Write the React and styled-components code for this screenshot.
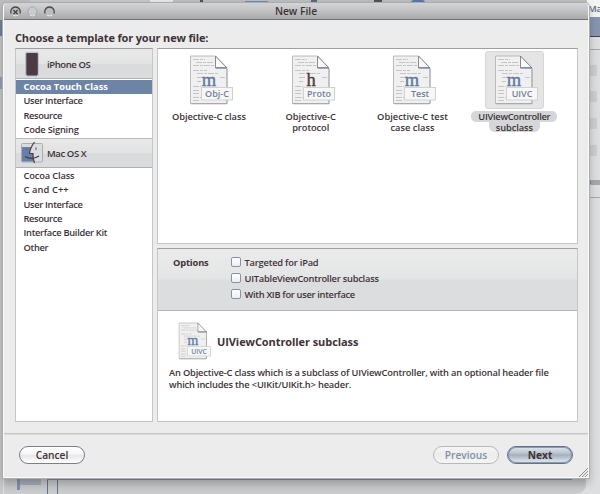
import React from "react";
import styled, { createGlobalStyle, css } from "styled-components";

const Global = createGlobalStyle`
  *{box-sizing:border-box}
  body{margin:0;overflow:hidden;color:#3d3238;font-family:"Open Sans","Noto Sans",sans-serif;font-size:9.3px;font-weight:600}
`;
const Desktop = styled.div`
  position:relative;width:600px;height:494px;background:#dcdee0;overflow:hidden;
`;
const Scrap = styled.div`
  position:absolute;left:${p => p.$x}px;top:${p => p.$y}px;width:${p => p.$w}px;height:${p => p.$h}px;
  background:${p => p.$c};border-radius:${p => p.$r || 0};
`;
const BackText = styled.span`
  position:absolute;left:588px;top:2px;font-size:9.5px;line-height:13px;color:#5b6d8d;letter-spacing:-.3px;
`;
const Window = styled.section`
  position:absolute;left:3px;top:3px;width:586px;height:475px;
  display:flex;flex-direction:column;background:#ececec;border-radius:4px 4px 0 0;
  border-left:1px solid #fafafa;border-right:1px solid #fafafa;border-bottom:1px solid #fafafa;
  box-shadow:0 0 0 1px #aaacae,0 4px 8px 1px rgba(0,0,0,.22);
`;
const TitleBar = styled.header`
  height:17px;flex:none;display:grid;grid-template-columns:60px 1fr 60px;align-items:center;
  border-radius:4px 4px 0 0;border-bottom:1px solid #6d7280;
  background:linear-gradient(#d3d4d5,#c2c4c5 45%,#aaa9a9);
`;
const Lights = styled.div`display:flex;gap:6px;padding-left:6px;`;
const Title = styled.h1`
  margin:0;text-align:center;font-size:10.3px;font-weight:600;line-height:16px;
`;
const Content = styled.main`
  height:414px;flex:none;display:grid;grid-template-columns:138px 421px;grid-template-rows:28px 374px;
  column-gap:4px;padding-left:11px;border-bottom:1px solid #c2c2c2;box-shadow:0 1px #dcdcdc;
`;
const Heading = styled.h2`
  grid-column:1/3;margin:0;font-size:11px;font-weight:700;line-height:16px;padding-top:10px;
  letter-spacing:-.16px;white-space:nowrap;
`;
const panel = css`
  border:1px solid #c6c6c6;border-top-color:#9f9f9f;background:#fff;
`;
const Sidebar = styled.nav`${panel}`;
const Group = styled.div`
  display:flex;align-items:center;height:30px;padding-left:5px;gap:4px;letter-spacing:-.4px;
  border-top:1px solid ${p => p.$first ? "#e6e6e6" : "#b9babb"};border-bottom:1px solid #aeb0b2;
  background:linear-gradient(#e9e9e9,#e2e3e3 50%,#d9dadb 52%,#dadcdd);
  font-size:9.5px;
`;
const List = styled.ul`
  list-style:none;margin:0;padding:1px 0 ${p => p.$tail || 0}px;
`;
const Item = styled.li`
  height:14.3px;line-height:14px;padding-left:7.5px;white-space:nowrap;letter-spacing:${p => p.$ls || 0}px;
  ${p => p.$selected && css`background:#6d84a4;color:#fff;font-weight:700;`}
`;
const Right = styled.div`display:grid;grid-template-rows:196px 1fr;row-gap:4px;`;
const Templates = styled.div`
  ${panel} display:grid;grid-template-columns:repeat(4,101.8px);padding:2px 0 0;
`;
const Template = styled.div`display:flex;flex-direction:column;align-items:center;`;
const IconWell = styled.div`
  width:59px;height:58px;border-radius:3px;display:flex;align-items:center;justify-content:center;padding-left:4px;
  border:1px solid transparent;
  ${p => p.$selected && css`background:#e5e5e5;border-color:#d6d6d6;`}
`;
const Label = styled.div`
  display:flex;flex-direction:column;align-items:center;margin-top:2px;white-space:nowrap;
`;
const Line = styled.span`
  height:10.6px;line-height:11.4px;padding:0 7px;letter-spacing:${p => p.$ls || 0}px;
  ${p => p.$selected && css`background:#d4d6d7;border-radius:5px;& + &{border-radius:0 0 6px 6px;}`}
`;
const Details = styled.div`${panel}`;
const Options = styled.div`
  display:grid;grid-template-columns:58px 1fr;height:62px;padding:5px 15px;
  border-bottom:1px solid #b4b5b6;
  background:linear-gradient(#ebebeb,#e4e5e5 48%,#dcddde 51%,#dcddde);
`;
const OptionsTitle = styled.strong`line-height:17px;font-weight:700;letter-spacing:-.15px;`;
const Choices = styled.div`display:flex;flex-direction:column;`;
const Choice = styled.label`
  display:flex;align-items:center;gap:3.5px;height:16px;letter-spacing:${p => p.$ls || 0}px;
`;
const Checkbox = styled.span`
  width:10px;height:10px;border:1px solid #8392ac;border-radius:2px;background:linear-gradient(#fff,#eee);
`;
const Summary = styled.div`
  display:flex;align-items:center;gap:6px;height:40px;margin:10px 0 0 20px;
`;
const SummaryTitle = styled.h3`margin:0;font-size:11px;font-weight:700;letter-spacing:-.08px;`;
const Description = styled.p`
  margin:6px 0 0 11px;line-height:11.5px;white-space:nowrap;letter-spacing:-.175px;
`;
const DescLine = styled.span`display:block;`;
const Footer = styled.footer`
  flex:1;display:flex;align-items:flex-start;padding:12px 15px 0;gap:8px;position:relative;
`;
const Button = styled.button`
  width:66px;height:18px;padding:0 0 1px;border-radius:9px;font:inherit;font-size:10.2px;line-height:14px;
  border:1px solid #777f8d;color:#3d3238;
  background:linear-gradient(#fff,#f6f6f6 45%,#e7e7e7 52%,#fff);
  ${p => p.$disabled && css`color:#8290a5;border-color:#b9b9b9;background:linear-gradient(#f5f5f5,#ececec 50%,#f5f5f5);`}
  ${p => p.$primary && css`border-color:#5d7296;font-weight:700;background:linear-gradient(#e2e7ed,#b9c2cd 40%,#a3afbf 50%,#d4dae1 85%,#dfe3e8);box-shadow:inset 0 0 0 1px #8b9bb5;`}
`;
const Spacer = styled.div`flex:1;`;
const Grip = styled.svg`position:absolute;right:0;bottom:0;`;

const Light = ({ kind }) => (
  <svg width="11" height="11" viewBox="0 0 11 11">
    <circle cx="5.5" cy="5.5" r="4.6" fill={kind === "minimize" ? "#c9cbce" : "#bcbdbf"} stroke={kind === "minimize" ? "#98a2b2" : "none"} strokeWidth=".8" />
    {kind !== "minimize" && <path d="M1.2 7.6A4.7 4.7 0 1 1 9.8 7.6" fill="none" stroke="#51454d" strokeWidth="1.3" />}
    {kind === "close" && <path d="M3.3 4L7.7 8.3M7.7 4L3.3 8.3" stroke="#51454d" strokeWidth="1.5" />}
    <path d="M3 9.3Q5.5 10.6 8 9.3" fill="none" stroke="#e7e8e9" />
  </svg>
);

const FileIcon = ({ letter = "m", tag, small }) => {
  const ink = letter === "h" ? "#4c3b43" : "#5d789e";
  return (
    <svg width={small ? 33 : 44} height={small ? 38 : 50} viewBox="0 0 44 50">
      <path d="M1.5 1H26.5L38 13V48.5H1.5Z" fill="#f0f0f0" stroke="#b9babb" />
      <path d="M2 48.8H38V14" fill="none" stroke="#9c9ea1" strokeWidth=".8" />
      <path d="M4 4.5H16M7 7.5H24M4 10.5H25M4 15.5H18M8 18.5H30M8 22.5H14M31 22.5H36M8 26.5H12M4 31.5H12M4 35.5H11M4 38.5H10M4 42.5H12M4 45.5H10" stroke="#c3c5c7" strokeWidth="1" strokeDasharray="6 1 3 1" />
      <path d="M26.5 1V13H38Z" fill="#fafafa" stroke="#85898f" />
      <path d="M27 12.8H38" stroke="#687995" />
      <text x="20" y="30.5" textAnchor="middle" fontFamily="Liberation Serif,serif" fontSize="18.5" fontWeight="400" stroke={ink} strokeWidth=".4" fill={ink}>{letter}</text>
      <rect x="12.5" y="32.5" width="31" height="12.5" fill="#f7f7f7" stroke="#d0d1d2" />
      <text x="28" y="42" textAnchor="middle" fontFamily="Open Sans,sans-serif" fontWeight="600" fontSize="9" fill="#71809b">{tag}</text>
    </svg>
  );
};

const Phone = () => (
  <svg width="22" height="26" viewBox="0 0 22 26">
    <rect x="4" y=".8" width="14" height="24.5" rx="2" fill="#bec2c8" />
    <rect x="5.3" y="2" width="11.5" height="22" rx="1" fill="#4c3b44" />
    <path d="M6 24.6H16" stroke="#647da3" />
  </svg>
);
const Finder = () => (
  <svg width="22" height="24" viewBox="0 0 22 24">
    <rect x=".5" y="2.5" width="21" height="18.5" rx="1" fill="#dadcde" stroke="#a9adb2" />
    <path d="M1 6H10L8.5 12H12V20.5H1Z" fill="#6581a9" />
    <path d="M13.5 1Q9 7 8.5 12.5H12Q11.5 18 13.5 22M4 15.5Q11 19.5 18 15" fill="none" stroke="#493a43" strokeWidth="1.2" />
    <path d="M5.5 7V9.5M15 6.5V9" stroke="#65748b" strokeWidth="1.3" />
  </svg>
);

const phoneItems = [["Cocoa Touch Class", 0], ["User Interface", -.33], ["Resource", -.37], ["Code Signing", -.2]];
const macItems = [["Cocoa Class", -.15], ["C and C++", .1], ["User Interface", -.33], ["Resource", -.37], ["Interface Builder Kit", -.3], ["Other", -.3]];
const templates = [
  ["m", "Obj-C", [["Objective-C class", -.08]]],
  ["h", "Proto", [["Objective-C", -.08], ["protocol", -.08]]],
  ["m", "Test", [["Objective-C test", 0], ["case class", 0]]],
  ["m", "UIVC", [["UIViewController", -.28], ["subclass", -.1]]],
];
const choices = [["Targeted for iPad", -.2], ["UITableViewController subclass", -.23], ["With XIB for user interface", -.3]];
const scraps = [
  [0, 0, 600, 20, "#bcbec0"], [30, 0, 120, 4, "#c6c8ca"], [150, 0, 23, 3, "#e8e9ea"],
  [245, 1, 23, 2, "#718bb3"], [311, 0, 6, 2, "#596880"], [374, 0, 8, 2, "#55505a"],
  [411, 0, 14, 3, "#5879a9", "5px 5px 0 0"], [200, 0, 3, 2, "#55505a"],
  [0, 20, 4, 16, "#7182a0"], [0, 36, 3, 458, "#c6c8ca"], [0, 77, 3, 12, "#93a2b8"],
  [587, 0, 13, 17, "#f3f4f4"], [588, 17, 12, 19, "#8795ae"], [588, 36, 12, 1, "#4f3e47"],
  [588, 49, 12, 1, "#a7a8aa"],
  [588, 65, 9, 11, "#cdced0"], [588, 91, 9, 11, "#cdced0"], [588, 118, 9, 11, "#cdced0"], [588, 145, 9, 11, "#cdced0"],
  [588, 180, 12, 5, "#a7a8aa"], [589, 181, 2, 3, "#6d86ae"], [588, 197, 12, 1, "#a7a8aa"],
  [4, 478, 582, 16, "linear-gradient(#c0c0c1,#c6c7c8 60%,#cbccce)", "0 0 10px 0"],
  [17, 479, 3, 11, "#7e90ac"], [20, 479, 21, 6, "#a2a9b5"],
  [47, 478, 1, 16, "#64738b"], [57, 478, 1, 16, "#64738b"],
  [47, 479, 525, 1, "#718bb3"],
];

export default function App() {
  return (
    <Desktop>
      <Global />
      {scraps.map(([x, y, w, h, c, r], i) => <Scrap key={i} $x={x} $y={y} $w={w} $h={h} $c={c} $r={r} />)}
      <BackText>Ma</BackText>
      <Window>
        <TitleBar>
          <Lights><Light kind="close" /><Light kind="minimize" /><Light kind="zoom" /></Lights>
          <Title>New File</Title>
        </TitleBar>
        <Content>
          <Heading>Choose a template for your new file:</Heading>
          <Sidebar>
            <Group $first><Phone />iPhone OS</Group>
            <List $tail={1}>
              {phoneItems.map(([t, ls], i) => <Item key={t} $ls={ls} $selected={i === 0}>{t}</Item>)}
            </List>
            <Group><Finder />Mac OS X</Group>
            <List>
              {macItems.map(([t, ls]) => <Item key={t} $ls={ls}>{t}</Item>)}
            </List>
          </Sidebar>
          <Right>
            <Templates>
              {templates.map(([letter, tag, lines], i) => (
                <Template key={tag}>
                  <IconWell $selected={i === 3}><FileIcon letter={letter} tag={tag} /></IconWell>
                  <Label>{lines.map(([t, ls]) => <Line key={t} $ls={ls} $selected={i === 3}>{t}</Line>)}</Label>
                </Template>
              ))}
            </Templates>
            <Details>
              <Options>
                <OptionsTitle>Options</OptionsTitle>
                <Choices>
                  {choices.map(([t, ls]) => <Choice key={t} $ls={ls}><Checkbox />{t}</Choice>)}
                </Choices>
              </Options>
              <Summary><FileIcon small tag="UIVC" /><SummaryTitle>UIViewController subclass</SummaryTitle></Summary>
              <Description>
                <DescLine>An Objective-C class which is a subclass of UIViewController, with an optional header file</DescLine>
                <DescLine>which includes the &lt;UIKit/UIKit.h&gt; header.</DescLine>
              </Description>
            </Details>
          </Right>
        </Content>
        <Footer>
          <Button>Cancel</Button><Spacer />
          <Button $disabled>Previous</Button><Button $primary>Next</Button>
          <Grip width="9" height="9" viewBox="0 0 9 9"><path d="M0 9L9 0M3 9L9 3M6 9L9 6" stroke="#8f9194" /></Grip>
        </Footer>
      </Window>
    </Desktop>
  );
}
